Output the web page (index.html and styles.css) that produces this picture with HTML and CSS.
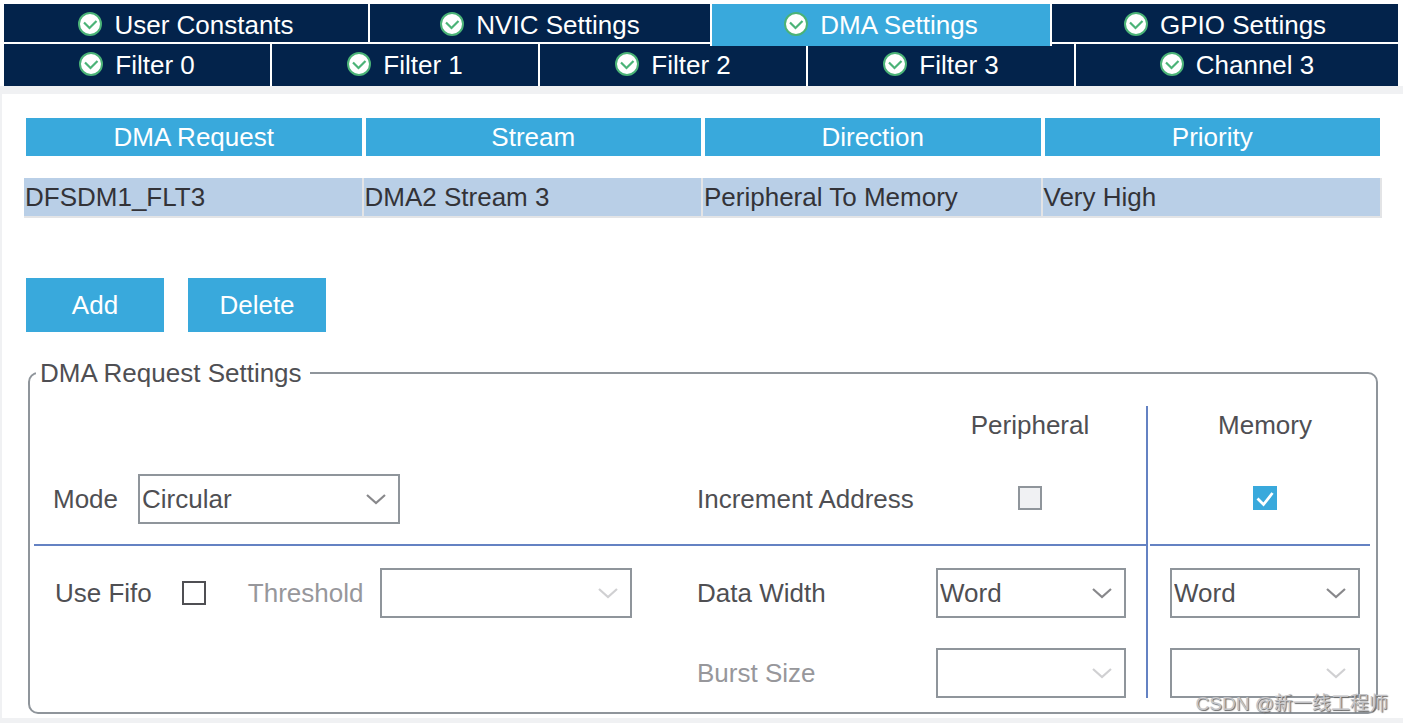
FILE: index.html
```html
<!DOCTYPE html>
<html lang="en">
<head>
    <meta charset="UTF-8">
    <meta name="viewport" content="width=device-width, initial-scale=1.0">
    <title>DMA Settings</title>
    <link rel="stylesheet" href="styles.css">
</head>
<body>
    <svg width="0" height="0" class="sprite">
        <symbol id="ok" viewBox="0 0 24 24">
            <circle cx="12" cy="12" r="11" fill="#fff" stroke="#4bb377" stroke-width="2"/>
            <path d="M6 10.500l5.500 5.500L18.500 9" fill="none" stroke="#4bb377" stroke-width="2.200"/>
        </symbol>
        <symbol id="arrow" viewBox="0 0 20 12">
            <path d="M1 2l9 8 9-8" fill="none" stroke="currentColor" stroke-width="2.200"/>
        </symbol>
        <symbol id="tick" viewBox="0 0 24 24">
            <path d="M4.500 12.500l6 6L19.500 7" fill="none" stroke="#fff" stroke-width="2.800"/>
        </symbol>
    </svg>

    <nav class="tabs">
        <div class="tab-row">
            <button class="tab user"><svg><use href="#ok"/></svg>User Constants</button>
            <button class="tab nvic"><svg><use href="#ok"/></svg>NVIC Settings</button>
            <button class="tab dma active"><svg><use href="#ok"/></svg>DMA Settings</button>
            <button class="tab gpio"><svg><use href="#ok"/></svg>GPIO Settings</button>
        </div>
        <div class="tab-row second">
            <button class="tab filter"><svg><use href="#ok"/></svg>Filter 0</button>
            <button class="tab filter"><svg><use href="#ok"/></svg>Filter 1</button>
            <button class="tab filter"><svg><use href="#ok"/></svg>Filter 2</button>
            <button class="tab filter"><svg><use href="#ok"/></svg>Filter 3</button>
            <button class="tab channel"><svg><use href="#ok"/></svg>Channel 3</button>
        </div>
    </nav>

    <main class="panel">
        <table class="requests">
            <thead>
                <tr>
                    <th>DMA Request</th>
                    <th>Stream</th>
                    <th>Direction</th>
                    <th>Priority</th>
                </tr>
            </thead>
            <tbody>
                <tr>
                    <td>DFSDM1_FLT3</td>
                    <td>DMA2 Stream 3</td>
                    <td>Peripheral To Memory</td>
                    <td>Very High</td>
                </tr>
            </tbody>
        </table>

        <div class="actions">
            <button class="btn">Add</button>
            <button class="btn">Delete</button>
        </div>

        <fieldset class="settings">
            <legend>DMA Request Settings</legend>
            <div class="grid">
                <div class="cell periph" id="periph">Peripheral</div>
                <div class="cell memory" id="memory">Memory</div>

                <div class="cell left ruled">
                    <label for="mode">Mode</label>
                    <span class="select mode">
                        <select id="mode"><option>Circular</option><option>Normal</option></select>
                        <svg><use href="#arrow"/></svg>
                    </span>
                </div>
                <div class="cell name ruled" id="increment">Increment Address</div>
                <div class="cell periph ruled">
                    <span class="check"><input type="checkbox" aria-labelledby="increment periph" disabled></span>
                </div>
                <div class="cell memory ruled">
                    <span class="check"><input type="checkbox" aria-labelledby="increment memory" checked><svg><use href="#tick"/></svg></span>
                </div>

                <div class="cell left fifo">
                    <label for="fifo">Use Fifo</label>
                    <span class="check"><input type="checkbox" id="fifo"></span>
                    <label for="threshold" class="off">Threshold</label>
                    <span class="select threshold">
                        <select id="threshold" disabled><option></option></select>
                        <svg><use href="#arrow"/></svg>
                    </span>
                </div>
                <div class="cell name width" id="width">Data Width</div>
                <div class="cell periph width">
                    <span class="select">
                        <select aria-labelledby="width periph"><option>Word</option><option>Byte</option></select>
                        <svg><use href="#arrow"/></svg>
                    </span>
                </div>
                <div class="cell memory width">
                    <span class="select">
                        <select aria-labelledby="width memory"><option>Word</option><option>Byte</option></select>
                        <svg><use href="#arrow"/></svg>
                    </span>
                </div>

                <div class="cell name burst off" id="burst">Burst Size</div>
                <div class="cell periph burst">
                    <span class="select">
                        <select aria-labelledby="burst periph" disabled><option></option></select>
                        <svg><use href="#arrow"/></svg>
                    </span>
                </div>
                <div class="cell memory burst">
                    <span class="select">
                        <select aria-labelledby="burst memory" disabled><option></option></select>
                        <svg><use href="#arrow"/></svg>
                    </span>
                </div>
            </div>
        </fieldset>
    </main>
    <div class="watermark">CSDN @新一线工程师</div>
</body>
</html>
```
FILE: styles.css
```css
* {
    box-sizing: border-box;
}
body {
    margin: 0;
    background-color: #f0f1f3;
    color: #4f4f53;
    font: 26px/30px "Liberation Sans", Arial, sans-serif;
}
button, select {
    font: inherit;
    color: inherit;
}
.sprite {
    display: block;
}

/* tabs */
.tabs {
    background-color: #fff;
    padding: 4px 5px 0 4px;
}
.tab-row {
    display: flex;
    gap: 2px;
    height: 38px;
}
.tab-row.second {
    height: 42px;
    margin-top: 2px;
}
.tab {
    display: flex;
    justify-content: center;
    align-items: flex-start;
    gap: 12px;
    flex-basis: 0;
    padding: 8px 0 0;
    border: none;
    background-color: #03234b;
    color: #fff;
    line-height: 26px;
    white-space: nowrap;
    cursor: pointer;
}
.tab svg {
    width: 24px;
    height: 24px;
}
.user { flex-grow: 364; }
.nvic { flex-grow: 340; }
.dma { flex-grow: 338; }
.gpio { flex-grow: 346; }
.filter { flex-grow: 266; }
.channel { flex-grow: 322; }
.tab.active {
    position: relative;
    height: 42px;
    background-color: #39a9dc;
    box-shadow: -2px 0 #fff, 2px 0 #fff;
}

/* request table */
.panel {
    background-color: #fff;
    margin: 8px 0 5px 2px;
    padding: 24px 21px 4px 22px;
}
.requests {
    width: 100%;
    table-layout: fixed;
    border-collapse: separate;
    border-spacing: 0;
}
.requests th {
    height: 60px;
    padding: 0;
    border: solid #fff;
    border-width: 0 2px 22px;
    background-color: #39a9dc;
    color: #fff;
    font-weight: normal;
}
.requests td {
    height: 40px;
    padding: 0 1px;
    border: solid #e3e4e6;
    border-width: 0 2px 2px 0;
    background-color: #b9cfe7;
    color: #333338;
}

/* buttons */
.actions {
    display: flex;
    gap: 24px;
    margin: 60px 2px 26px;
}
.btn {
    width: 138px;
    height: 54px;
    padding: 0;
    border: none;
    background-color: #39a9dc;
    color: #fff;
    cursor: pointer;
}

/* settings box */
.settings {
    min-width: 0;
    margin: 0 4px;
    padding: 18px 6px 14px 4px;
    border: 2px solid #8f959b;
    border-radius: 10px;
}
.settings legend {
    margin-left: 2px;
    padding: 0 8px 0 4px;
}
.grid {
    display: grid;
    grid-template-columns: 663fr 237fr 214fr 222fr;
    grid-template-rows: 38px 102px 72px 80px;
}
.cell {
    display: flex;
    align-items: center;
    white-space: nowrap;
}
.left {
    grid-column: 1;
}
.name {
    grid-column: 2;
}
.periph {
    grid-column: 3;
    justify-content: center;
    padding: 0 22px 0 2px;
    border-right: 2px solid #6482c3;
}
.memory {
    grid-column: 4;
    justify-content: center;
    margin-left: 2px;
    padding: 0 10px 0 20px;
}
.ruled {
    padding-top: 8px;
    border-bottom: 2px solid #6482c3;
}
.left.ruled {
    gap: 20px;
    padding: 10px 0 0 19px;
}
.name.ruled {
    padding-top: 10px;
}
.fifo {
    padding: 22px 0 0 21px;
}
.fifo .check {
    margin: 0 42px 0 30px;
}
.width {
    padding-top: 22px;
}
.burst {
    padding-top: 30px;
}
.periph.width, .periph.burst {
    padding-right: 20px;
}
.off {
    color: #97979b;
}

.select {
    display: grid;
    align-items: center;
    width: 100%;
}
.select.mode {
    width: 262px;
}
.select.threshold {
    width: 252px;
    margin-left: 17px;
}
.select select {
    grid-area: 1 / 1;
    width: 100%;
    height: 50px;
    padding: 0 2px;
    border: 2px solid #8f959b;
    border-radius: 0;
    background-color: #fff;
    appearance: none;
    opacity: 1;
}
.select svg {
    grid-area: 1 / 1;
    justify-self: end;
    width: 20px;
    height: 12px;
    margin-right: 14px;
    color: #88888b;
    pointer-events: none;
}
.select select:disabled + svg {
    color: #d0d0d2;
}

.check {
    display: grid;
}
.check input {
    grid-area: 1 / 1;
    width: 24px;
    height: 24px;
    margin: 0;
    border: 2px solid #4f4f53;
    background-color: #fff;
    appearance: none;
}
.check input:disabled {
    border-color: #8f959b;
    background-color: #f0f1f3;
}
.check input:checked {
    border-color: #39a9dc;
    background-color: #39a9dc;
}
.check svg {
    grid-area: 1 / 1;
    width: 24px;
    height: 24px;
    pointer-events: none;
}

.watermark {
    position: absolute;
    right: 15px;
    bottom: 4px;
    color: #c4c4c7;
    font-family: "Liberation Sans", "Noto Sans CJK SC", sans-serif;
    font-size: 19px;
    text-shadow: 1px 1px 1px #666;
}
```
